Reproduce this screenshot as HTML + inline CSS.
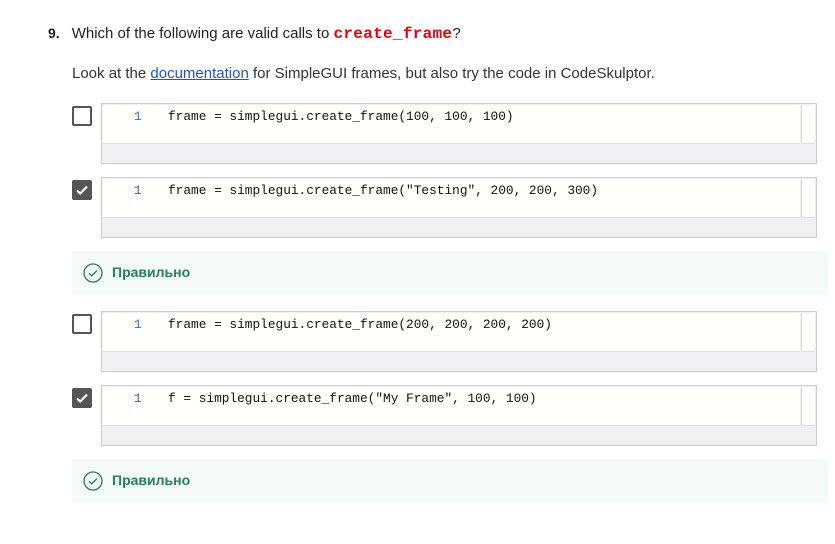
<!DOCTYPE html>
<html><head><meta charset="utf-8"><style>
body{margin:0;width:835px;height:544px;background:#fff;font-family:"Liberation Sans",sans-serif;color:#1f1f1f;position:relative;overflow:hidden}
.a{position:absolute}
.q{left:48px;top:25px;font-size:15px;white-space:nowrap;letter-spacing:0}
.q b{font-size:14px;margin-right:12px}
.q code{font-family:"Liberation Mono",monospace;color:#e8000b;font-weight:bold;font-size:16px;letter-spacing:0.3px}
.p{left:72px;top:65px;font-size:15px;white-space:nowrap;letter-spacing:0;color:#333}
.p a{color:#1a59c5;text-decoration:underline}
.box{left:101px;width:714px;height:59px;border:1px solid #ccc;background:#f0f0f2}
.box .in{position:absolute;left:1px;top:1px;width:697px;height:38px;background:#fffffc;border-bottom:1px solid #ddd}
.box .sb{position:absolute;left:699px;top:1px;width:13px;height:38px;background:#fdfdfb;border-left:1px solid #ddd;border-bottom:1px solid #ddd}
.box .n{position:absolute;left:32px;top:5px;font-family:"Liberation Mono",monospace;font-size:12.8px;color:#237893}
.box .c{position:absolute;left:66px;top:5px;font-family:"Liberation Mono",monospace;font-size:12.8px;color:#111;white-space:pre}
.cb{left:72px;width:16px;height:16px;border:2px solid #555;border-radius:2px;background:#fff}
.cb.on{background:#555}
.fb{left:72px;width:756px;height:44px;background:#f5f9f8}
.fb span{position:absolute;left:40px;top:13px;color:#1f8354;font-weight:bold;font-size:14px}
.fb svg{position:absolute;left:11px;top:12px}
</style></head><body>
<div class="a q"><b>9.</b>Which of the following are valid calls to <code>create_frame</code>?</div>
<div class="a p">Look at the <a>documentation</a> for SimpleGUI frames, but also try the code in CodeSkulptor.</div>

<div class="a cb" style="top:106px"></div>
<div class="a box" style="top:103px"><div class="in"></div><div class="sb"></div><div class="n">1</div><div class="c">frame = simplegui.create_frame(100, 100, 100)</div></div>

<div class="a cb on" style="top:180px"><svg width="16" height="16" viewBox="0 0 16 16"><path d="M3 8.5l3.2 3L13 4.5" stroke="#fff" stroke-width="2.2" fill="none"/></svg></div>
<div class="a box" style="top:177px"><div class="in"></div><div class="sb"></div><div class="n">1</div><div class="c">frame = simplegui.create_frame("Testing", 200, 200, 300)</div></div>

<div class="a fb" style="top:251px"><svg width="20" height="20" viewBox="0 0 20 20"><circle cx="10" cy="10" r="9" stroke="#1f8354" stroke-width="1.3" fill="none"/><path d="M6 10.2l2.8 2.6L14 7.5" stroke="#1f8354" stroke-width="1.3" fill="none"/></svg><span>Правильно</span></div>

<div class="a cb" style="top:314px"></div>
<div class="a box" style="top:311px"><div class="in"></div><div class="sb"></div><div class="n">1</div><div class="c">frame = simplegui.create_frame(200, 200, 200, 200)</div></div>

<div class="a cb on" style="top:388px"><svg width="16" height="16" viewBox="0 0 16 16"><path d="M3 8.5l3.2 3L13 4.5" stroke="#fff" stroke-width="2.2" fill="none"/></svg></div>
<div class="a box" style="top:385px"><div class="in"></div><div class="sb"></div><div class="n">1</div><div class="c">f = simplegui.create_frame("My Frame", 100, 100)</div></div>

<div class="a fb" style="top:459px"><svg width="20" height="20" viewBox="0 0 20 20"><circle cx="10" cy="10" r="9" stroke="#1f8354" stroke-width="1.3" fill="none"/><path d="M6 10.2l2.8 2.6L14 7.5" stroke="#1f8354" stroke-width="1.3" fill="none"/></svg><span>Правильно</span></div>
</body></html>
